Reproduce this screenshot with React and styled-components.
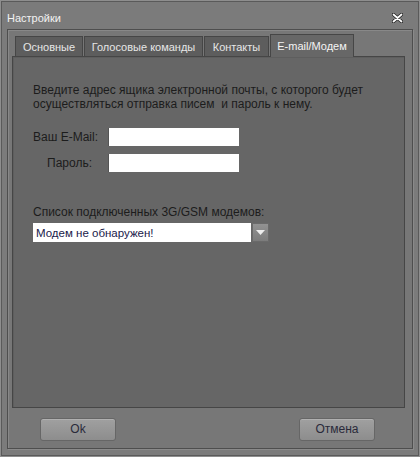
import React from "react";
import styled, { createGlobalStyle } from "styled-components";

const GlobalStyle = createGlobalStyle`
  html, body { margin: 0; padding: 0; background: #7a7a7a; }
  * { box-sizing: border-box; }
`;

const font = `"Liberation Sans", Arial, sans-serif`;

const Dialog = styled.div`
  width: 420px;
  height: 457px;
  background: #7b7b7b;
  border: 1px solid #8e8e8e;
  box-shadow: inset 0 0 0 1px #5a5a5a;
  display: flex;
  flex-direction: column;
  font-family: ${font};
`;

const TitleBar = styled.div`
  height: 28px;
  display: flex;
  align-items: center;
  justify-content: space-between;
  padding: 6px 16px 0 6px;
  color: #f2f2f2;
  font-size: 11px;
`;

const Close = styled.svg`
  width: 11px;
  height: 10px;
`;

const Frame = styled.div`
  margin: 0 6px 7px 6px;
  flex: 1;
  border: 1px solid #4e4e4e;
  box-shadow: inset 1px 1px 0 #888, 1px 1px 0 #8a8a8a;
  background: #777;
  display: flex;
  flex-direction: column;
  padding: 4px 7px 0 4px;
`;

const Tabs = styled.div`
  display: flex;
  padding-left: 3px;
  align-items: flex-end;
  height: 22px;
`;

const Tab = styled.div`
  width: ${(p) => p.$w}px;
  height: ${(p) => (p.$active ? "23px" : "20px")};
  margin-right: 1px;
  display: flex;
  align-items: center;
  justify-content: center;
  background: ${(p) => (p.$active ? "#676767" : "#5d5d5d")};
  border: 1px solid #464646;
  border-bottom: none;
  color: ${(p) => (p.$active ? "#f4f4f4" : "#e6e6e6")};
  font-size: 11px;
  white-space: nowrap;
  position: relative;
  z-index: ${(p) => (p.$active ? 2 : 1)};
  margin-bottom: ${(p) => (p.$active ? "-1px" : "0")};
`;

const Panel = styled.div`
  height: 352px;
  background: #666;
  border: 1px solid #464646;
  box-shadow: inset 1px 1px 0 #5e5e5e;
  padding: 26px 20px 0 20px;
  color: #1c1c1c;
  font-size: 12px;
`;

const Intro = styled.p`
  margin: 0 0 17px 0;
  line-height: 14px;
  white-space: nowrap;
`;

const FormGrid = styled.div`
  display: grid;
  grid-template-columns: 59px 131px;
  column-gap: 16px;
  row-gap: 8px;
  align-items: center;
  margin-bottom: 33px;
`;

const Label = styled.label`
  text-align: right;
  white-space: nowrap;
`;

const Field = styled.div`
  height: 18px;
  background: #fff;
  border-left: 1px solid #555;
`;

const SelectLabel = styled.div`
  line-height: 14px;
  margin-bottom: 4px;
`;

const Select = styled.div`
  display: flex;
  width: 236px;
  height: 19px;
`;

const SelectValue = styled.div`
  flex: 1;
  background: #fff;
  color: #20204a;
  padding: 0 3px;
  display: flex;
  align-items: center;
  font-size: 11.5px;
`;

const SelectArrow = styled.div`
  width: 17px;
  margin-left: 1px;
  background: linear-gradient(#929292, #7c7c7c);
  border: 1px solid #6a6a6a;
  display: flex;
  align-items: center;
  justify-content: center;
`;

const Footer = styled.div`
  flex: 1;
  display: flex;
  justify-content: space-between;
  align-items: center;
  padding: 0 30px 0 28px;
`;

const Button = styled.button`
  width: 76px;
  height: 23px;
  border: 1px solid #666;
  border-radius: 3px;
  background: linear-gradient(#a0a0a0, #8d8d8d);
  box-shadow: inset 0 1px 0 #b0b0b0;
  font-family: ${font};
  font-size: 12px;
  color: #2a2a3a;
  padding: 0;
  margin-top: 2px;
`;

export default function App() {
  return (
    <>
      <GlobalStyle />
      <Dialog>
        <TitleBar>
          <span>Настройки</span>
          <Close viewBox="0 0 11 10">
            <path d="M1.5 1.5 L9.5 8.5 M9.5 1.5 L1.5 8.5" stroke="#222" strokeWidth="3.4" strokeLinecap="round" />
            <path d="M1.5 1.5 L9.5 8.5 M9.5 1.5 L1.5 8.5" stroke="#fff" strokeWidth="1.8" strokeLinecap="round" />
          </Close>
        </TitleBar>
        <Frame>
          <Tabs>
            <Tab $w={68}>Основные</Tab>
            <Tab $w={119}>Голосовые команды</Tab>
            <Tab $w={65}>Контакты</Tab>
            <Tab $w={84} $active>E-mail/Модем</Tab>
          </Tabs>
          <Panel>
            <Intro>
              Введите адрес ящика электронной почты, с которого будет
              <br />
              осуществляться отправка писем&nbsp; и пароль к нему.
            </Intro>
            <FormGrid>
              <Label>Ваш E-Mail:</Label>
              <Field />
              <Label>Пароль:</Label>
              <Field />
            </FormGrid>
            <SelectLabel>Список подключенных 3G/GSM модемов:</SelectLabel>
            <Select>
              <SelectValue>Модем не обнаружен!</SelectValue>
              <SelectArrow>
                <svg width="9" height="5" viewBox="0 0 9 5">
                  <path d="M0 0 H9 L4.5 5 Z" fill="#eee" />
                </svg>
              </SelectArrow>
            </Select>
          </Panel>
          <Footer>
            <Button>Ok</Button>
            <Button>Отмена</Button>
          </Footer>
        </Frame>
      </Dialog>
    </>
  );
}
